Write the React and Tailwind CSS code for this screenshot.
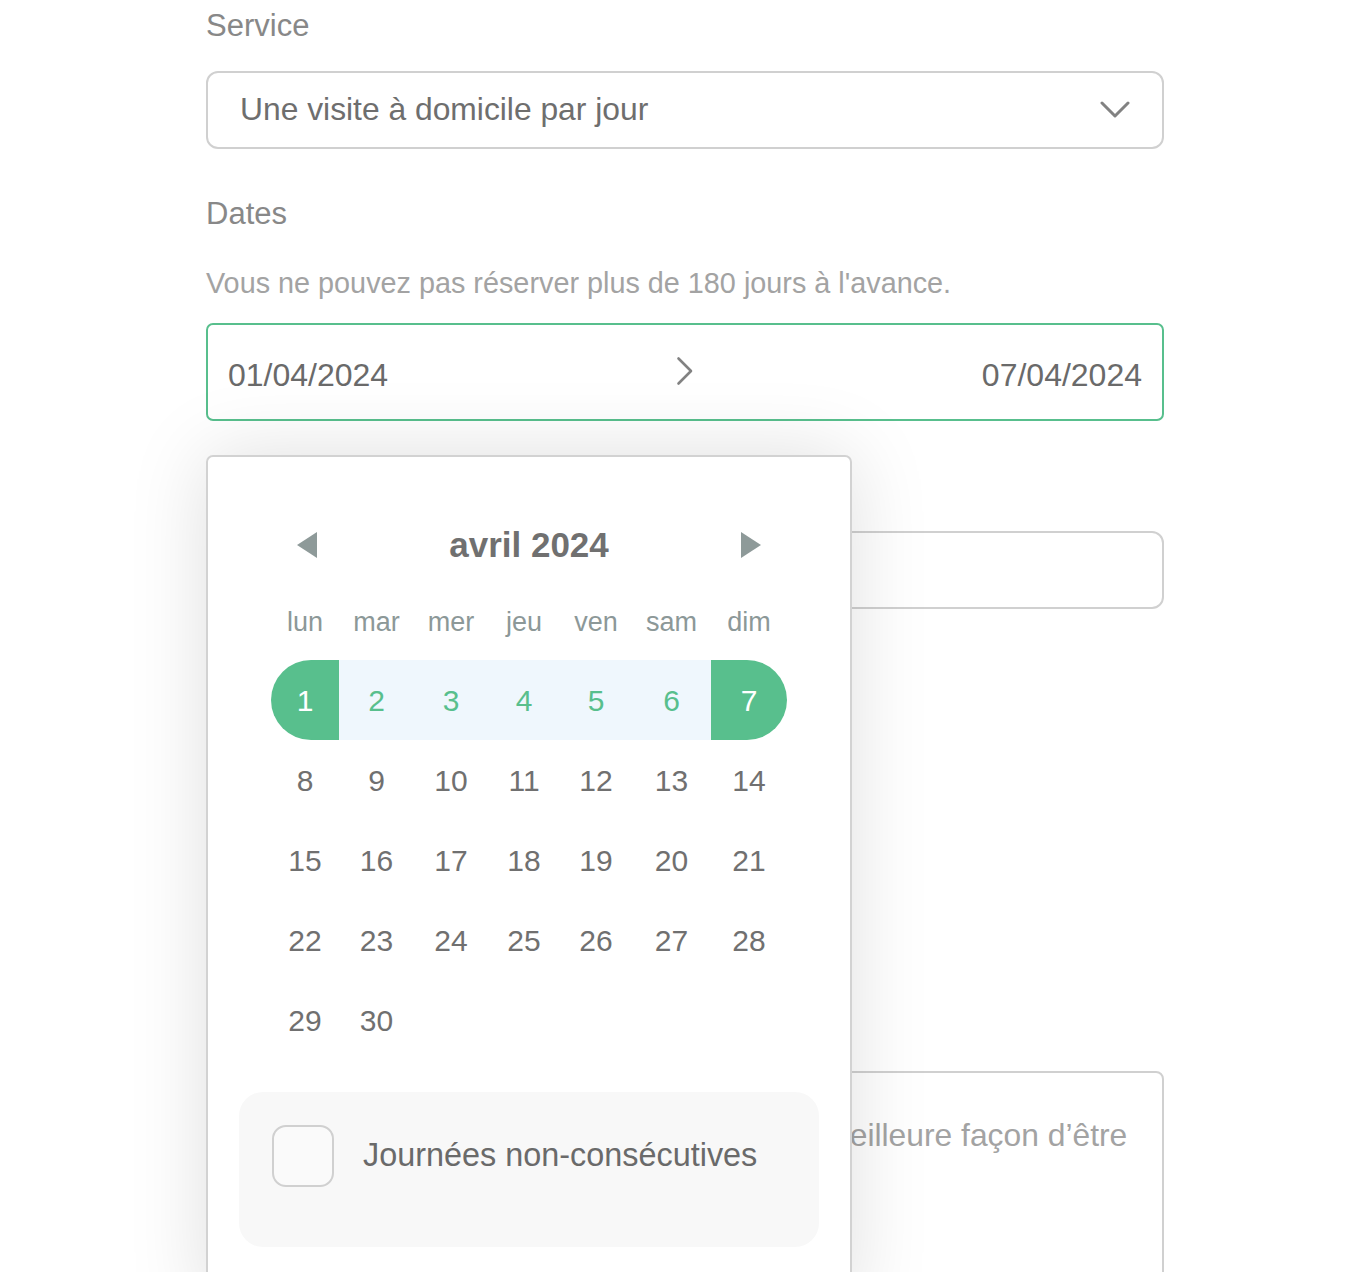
import React from "react";

export default function App() {
  const rows = [
    [1, 2, 3, 4, 5, 6, 7],
    [8, 9, 10, 11, 12, 13, 14],
    [15, 16, 17, 18, 19, 20, 21],
    [22, 23, 24, 25, 26, 27, 28],
    [29, 30, null, null, null, null, null],
  ];
  const weekdays = ["lun", "mar", "mer", "jeu", "ven", "sam", "dim"];

  const cellClass = (d) => {
    if (d === 1) return "bg-[#58bf8d] text-white rounded-l-full";
    if (d === 7) return "bg-[#58bf8d] text-white rounded-r-full";
    if (d >= 2 && d <= 6) return "bg-[#eff7fd] text-[#58bf8d]";
    return "text-[#707070]";
  };

  return (
    <div className="relative min-h-[1272px] w-full overflow-hidden bg-white font-['Liberation_Sans',Arial,Helvetica,sans-serif]">
      <div className="relative ml-[206px] w-[958px] pt-[6px]">
        {/* Service */}
        <div className="text-[31px] leading-[40px] text-[#888888]">Service</div>
        <div className="mt-[25px] flex h-[78px] items-center justify-between rounded-[12px] border-2 border-[#d0d0d0] pl-[32px] pr-[32px]">
          <span className="text-[31.8px] text-[#6e6e6e]">Une visite à domicile par jour</span>
          <svg width="30" height="18" viewBox="0 0 30 18" fill="none">
            <path d="M2 2 L15 15 L28 2" stroke="#828282" strokeWidth="3" strokeLinecap="round" strokeLinejoin="round" />
          </svg>
        </div>

        {/* Dates */}
        <div className="mt-[45px] text-[31px] leading-[40px] text-[#888888]">Dates</div>
        <div className="mt-[31px] text-[28.8px] leading-[36px] text-[#a3a3a3]">
          Vous ne pouvez pas réserver plus de 180 jours à l'avance.
        </div>
        <div className="mt-[22px] flex h-[98px] items-center rounded-[7px] border-2 border-[#58bf8d] px-[20px] pt-[6px]">
          <span className="flex-1 text-[32px] text-[#6a6a6a]">01/04/2024</span>
          <svg width="18" height="30" viewBox="0 0 18 30" fill="none" className="-mt-[8px]">
            <path d="M2.5 2.5 L15 15 L2.5 27.5" stroke="#828282" strokeWidth="2.6" strokeLinecap="round" strokeLinejoin="round" />
          </svg>
          <span className="flex-1 text-right text-[32px] text-[#6a6a6a]">07/04/2024</span>
        </div>

        {/* field behind popup */}
        <div className="mt-[110px] h-[78px] rounded-[12px] border-2 border-[#d0d0d0]" />

        {/* textarea behind popup */}
        <div className="mt-[462px] h-[300px] rounded-[8px] border-2 border-[#d0d0d0] px-[32px] pt-[40px] text-[31.8px] leading-[44px] text-[#a3a3a3]">
          Expliquez à votre pet-sitter quelle sera la meilleure façon d’être avec votre animal
        </div>

        {/* Calendar popup */}
        <div className="absolute left-0 top-[455px] w-[646px] rounded-[7px] border-2 border-[#d2d2d2] bg-white pb-[60px] pt-[63px] shadow-[0_0_80px_rgba(0,0,0,0.13)]">
          <div className="mx-auto flex h-[50px] w-[464px] items-center justify-between">
            <svg width="20" height="26" viewBox="0 0 20 26">
              <path d="M20 0 L0 13 L20 26 Z" fill="#8e9a99" />
            </svg>
            <span className="text-[35px] font-bold text-[#707070]">avril 2024</span>
            <svg width="20" height="26" viewBox="0 0 20 26">
              <path d="M0 0 L20 13 L0 26 Z" fill="#8e9a99" />
            </svg>
          </div>

          <div className="mx-auto mt-[32px] w-[516px]">
            <div className="grid h-[40px] grid-cols-[68px_75px_74px_72px_72px_79px_76px] items-center">
              {weekdays.map((w) => (
                <div key={w} className="text-center text-[27px] text-[#8c9898]">
                  {w}
                </div>
              ))}
            </div>
            <div className="mt-[18px]">
              {rows.map((r, ri) => (
                <div key={ri} className="grid h-[80px] grid-cols-[68px_75px_74px_72px_72px_79px_76px]">
                  {r.map((d, ci) => (
                    <div
                      key={ci}
                      className={
                        "flex h-[80px] items-center justify-center text-[30px] " +
                        (d ? cellClass(d) : "")
                      }
                    >
                      {d}
                    </div>
                  ))}
                </div>
              ))}
            </div>
          </div>

          <div className="mx-[31px] mt-[32px] flex items-start rounded-[24px] bg-[#f8f8f8] pb-[60px] pl-[33px] pt-[33px]">
            <div className="h-[62px] w-[62px] shrink-0 rounded-[14px] border-2 border-[#d0d0d0] bg-[#fafafa]" />
            <span className="ml-[29px] mt-[10px] text-[32.4px] leading-[40px] text-[#6a6a6a]">
              Journées non-consécutives
            </span>
          </div>
        </div>
      </div>
    </div>
  );
}
